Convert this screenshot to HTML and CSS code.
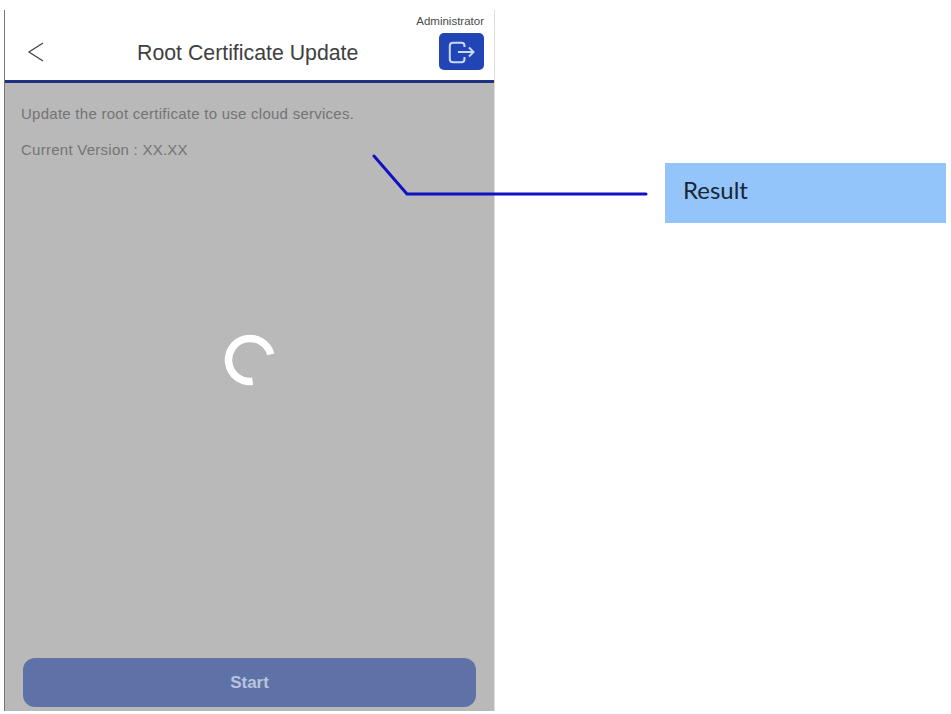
FILE: index.html
```html
<!DOCTYPE html>
<html lang="en">
<head>
<meta charset="utf-8">
<title>Root Certificate Update</title>
<link rel="stylesheet" href="styles.css">
</head>
<body>
<div class="page">
  <section class="phone">
    <header class="app-header">
      <svg class="back" viewBox="0 0 20 22" width="20" height="22" aria-hidden="true"><path d="M17 2 L3 11 L17 20" fill="none" stroke="#444" stroke-width="1.3"/></svg>
      <h1 class="title">Root Certificate Update</h1>
      <div class="user">
        <span class="user-name">Administrator</span>
        <span class="logout">
          <svg viewBox="0 0 28 24" width="28" height="24" aria-hidden="true">
            <path d="M16.5 7 V6 Q16.5 2.8 13.5 2.8 H5 Q1.8 2.8 1.8 6 V19 Q1.8 22.2 5 22.2 H13.5 Q16.5 22.2 16.5 19 V17" fill="none" stroke="#c9d9f8" stroke-width="2"/>
            <path d="M10 12 H25.5 M21 7.5 L25.5 12 L21 16.5" fill="none" stroke="#c9d9f8" stroke-width="2"/>
          </svg>
        </span>
      </div>
    </header>
    <main class="content">
      <p class="line">Update the root certificate to use cloud services.</p>
      <p class="line">Current Version : XX.XX</p>
      <div class="spinner-area">
        <svg class="spinner" viewBox="0 0 52 52" width="52" height="52" aria-hidden="true"><path d="M46.8 20.4 A21.5 21.5 0 1 0 28.6 47.3" fill="none" stroke="#fff" stroke-width="7.5"/></svg>
      </div>
      <button class="start" type="button">Start</button>
    </main>
  </section>
  <aside class="result">Result</aside>
</div>
<svg class="connector" width="300" height="60" viewBox="0 0 300 60" aria-hidden="true"><path d="M2 3 L35 41 H274" fill="none" stroke="#1111c4" stroke-width="3" stroke-linecap="round" stroke-linejoin="round"/></svg>
</body>
</html>
```

FILE: styles.css
```css
* { box-sizing: border-box; }
html, body { margin: 0; padding: 0; background: #fff; }
body { width: 951px; height: 714px; overflow: hidden; position: relative; font-family: "Liberation Sans", Arial, sans-serif; }
.page { display: flex; align-items: flex-start; height: 714px; padding: 10px 0 0 4px; }

.phone { width: 491px; height: 701px; display: flex; flex-direction: column; border-left: 1px solid #777; border-right: 1px solid #ddd; }
.app-header { height: 73px; flex: none; display: flex; align-items: flex-end; padding: 0 10px 15px 21px; background: #fff; border-bottom: 3px solid #1f2f83; }
.back { flex: none; margin-bottom: 2px; }
.title { margin: 0; flex: 1; padding-left: 91px; font-size: 21.3px; font-weight: 400; line-height: 24px; color: #404040; white-space: nowrap; }
.user { flex: none; width: 72px; display: flex; flex-direction: column; align-items: flex-end; gap: 6px; margin-bottom: -5px; }
.user-name { font-size: 11.5px; line-height: 12px; color: #4a4a4a; white-space: nowrap; }
.logout { width: 45px; height: 37px; border-radius: 5px; background: #2145b5; display: flex; align-items: center; justify-content: center; }

.content { flex: 1; background: #b9b9b9; padding: 23px 17px 4px 16px; display: flex; flex-direction: column; }
.line { margin: 0 0 20px; font-size: 15px; letter-spacing: 0.26px; line-height: 16px; color: #747474; white-space: nowrap; }
.spinner-area { flex: 1; display: flex; align-items: center; justify-content: center; padding: 0 0 116px 1px; }
.start { width: 453px; height: 49px; flex: none; margin-left: 2px; padding: 0; border: 0; border-radius: 12px; background: #5f72a8; color: #b9c3dc; font-family: "Liberation Sans", Arial, sans-serif; font-size: 17px; font-weight: 700; }

.result { width: 281px; height: 60px; margin: 153px 0 0 170px; padding-left: 18px; background: #93c5fb; color: #1a2638; font-family: Lato, sans-serif; font-size: 24px; line-height: 54px; flex: none; }

.connector { position: absolute; left: 372px; top: 153px; }
```
